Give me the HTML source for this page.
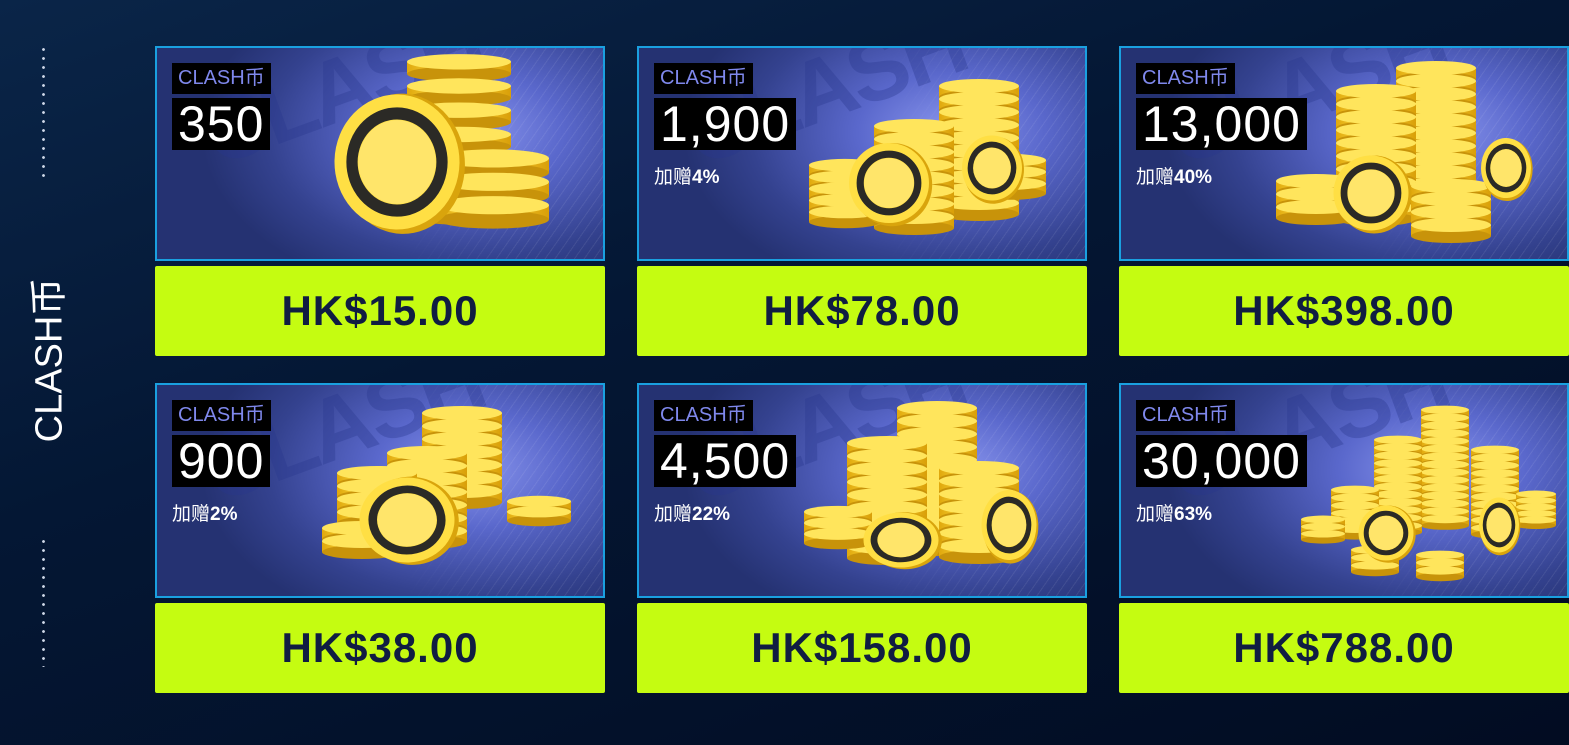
<!DOCTYPE html>
<html><head><meta charset="utf-8"><style>
*{margin:0;padding:0;box-sizing:border-box}
body{width:1569px;height:745px;overflow:hidden;background:linear-gradient(160deg,#0a2548 0%,#041734 40%,#020c22 100%);font-family:"Liberation Sans","Noto Sans CJK SC",sans-serif;position:relative}
.side{position:absolute;left:45px;top:360px;transform:translate(-50%,-50%) rotate(-90deg);color:#fff;font-size:38px;white-space:nowrap;letter-spacing:0}
.dots{position:absolute;left:42px;width:3px;background:radial-gradient(circle,#cfd8e8 1.2px,transparent 1.6px) 0 0/3px 9px repeat-y}
.card{position:absolute;width:450px}
.img{height:215px;border:2px solid #1aa0e0;background:radial-gradient(ellipse 60% 80% at 70% 40%,#8a96ee 0%,#5a68cc 35%,#34428f 75%,#253272 100%);position:relative;overflow:hidden}
.img:after{content:"";position:absolute;inset:0;background:repeating-linear-gradient(-55deg,transparent 0 7px,rgba(255,255,255,.08) 7px 8px);-webkit-mask:linear-gradient(90deg,transparent 55%,#000 80%);mask:linear-gradient(90deg,transparent 55%,#000 80%)}
.wm{position:absolute;left:40px;top:-10px;font-size:90px;font-weight:bold;color:rgba(40,55,140,.35);transform:rotate(-20deg);letter-spacing:-4px}
.lab{position:absolute;left:15px;top:15px;background:#000;color:#7f88ec;font-size:20px;padding:2px 6px 2px;line-height:27px;z-index:3}
.num{position:absolute;left:15px;top:50px;background:#000;color:#fff;font-size:50px;line-height:52px;padding:0 6px;z-index:3;letter-spacing:1px}
.bon{position:absolute;left:15px;top:114px;color:#fff;font-size:19px;z-index:3}
.bon b{font-weight:bold}
.btn{margin-top:5px;height:90px;background:#c5fc11;border-radius:2px;color:#101d42;font-size:42px;font-weight:bold;display:flex;align-items:center;justify-content:center;letter-spacing:1px}
svg.c{position:absolute;left:0;top:0;z-index:2}
</style></head><body>
<svg width="0" height="0" style="position:absolute"><defs>
<linearGradient id="g" x1="0" x2="1"><stop offset="0" stop-color="#e0a80c"/><stop offset=".4" stop-color="#ffe04a"/><stop offset="1" stop-color="#d99f08"/></linearGradient>
<g id="s"><rect x="0" y="8" width="80" height="11" fill="url(#g)"/><ellipse cx="40" cy="19" rx="40" ry="7" fill="#c8930a"/><ellipse cx="40" cy="8" rx="40" ry="7" fill="#ffe55c"/></g>
<g id="f"><ellipse cx="4" cy="2" rx="50" ry="52" fill="#d9a40c"/><circle r="50" fill="#ffdf44"/><circle r="36" fill="none" stroke="#2b2a26" stroke-width="9"/><circle r="31" fill="#ffe56a"/></g>
</defs></svg>

<div class="dots" style="top:45px;height:132px"></div>
<div class="dots" style="top:537px;height:130px"></div>
<div class="side">CLASH币</div>

<div class="card" style="left:155px;top:46px"><div class="img"><div class="wm">CLASH</div>
<svg class="c" width="450" height="215" viewBox="0 0 450 215">
<g transform="translate(250,5) scale(1.3,1.1)"><use href="#s" y="0"/><use href="#s" y="22"/><use href="#s" y="44"/><use href="#s" y="66"/><use href="#s" y="88"/><use href="#s" y="110"/><use href="#s" y="130"/></g>
<g transform="translate(280,100) scale(1.4,1.3)"><use href="#s" y="0"/><use href="#s" y="18"/><use href="#s" y="36"/></g>
<g transform="translate(240,114) scale(1.25,1.35) rotate(-10)"><use href="#f"/></g>
</svg>
<div class="lab">CLASH币</div><div class="num">350</div></div>
<div class="btn">HK$15.00</div></div>

<div class="card" style="left:637px;top:46px"><div class="img"><div class="wm">CLASH</div>
<svg class="c" width="450" height="215" viewBox="0 0 450 215">
<g transform="translate(300,30)"><use href="#s" y="0"/><use href="#s" y="13"/><use href="#s" y="26"/><use href="#s" y="39"/><use href="#s" y="52"/><use href="#s" y="65"/><use href="#s" y="78"/><use href="#s" y="91"/><use href="#s" y="104"/><use href="#s" y="117"/></g>
<g transform="translate(235,70)"><use href="#s" y="0"/><use href="#s" y="13"/><use href="#s" y="26"/><use href="#s" y="39"/><use href="#s" y="52"/><use href="#s" y="65"/><use href="#s" y="78"/><use href="#s" y="91"/></g>
<g transform="translate(170,110) scale(.9)"><use href="#s" y="0"/><use href="#s" y="13"/><use href="#s" y="26"/><use href="#s" y="39"/><use href="#s" y="52"/></g>
<g transform="translate(335,105) scale(.9)"><use href="#s" y="0"/><use href="#s" y="13"/><use href="#s" y="26"/></g>
<use href="#f" transform="translate(250,135) scale(.8)"/>
<use href="#f" transform="translate(353,120) scale(.6,.65) rotate(20)"/>
</svg>
<div class="lab">CLASH币</div><div class="num">1,900</div><div class="bon">加赠<b>4%</b></div></div>
<div class="btn">HK$78.00</div></div>

<div class="card" style="left:1119px;top:46px"><div class="img"><div class="wm">CLASH</div>
<svg class="c" width="450" height="215" viewBox="0 0 450 215">
<g transform="translate(275,12)"><use href="#s" y="0"/><use href="#s" y="13"/><use href="#s" y="26"/><use href="#s" y="39"/><use href="#s" y="52"/><use href="#s" y="65"/><use href="#s" y="78"/><use href="#s" y="91"/><use href="#s" y="104"/><use href="#s" y="117"/><use href="#s" y="130"/></g>
<g transform="translate(215,35)"><use href="#s" y="0"/><use href="#s" y="13"/><use href="#s" y="26"/><use href="#s" y="39"/><use href="#s" y="52"/><use href="#s" y="65"/><use href="#s" y="78"/><use href="#s" y="91"/><use href="#s" y="104"/><use href="#s" y="117"/></g>
<g transform="translate(290,130)"><use href="#s" y="0"/><use href="#s" y="13"/><use href="#s" y="26"/><use href="#s" y="39"/></g>
<g transform="translate(155,125)"><use href="#s" y="0"/><use href="#s" y="13"/><use href="#s" y="26"/></g>
<use href="#f" transform="translate(250,145) scale(.75)"/>
<use href="#f" transform="translate(385,120) scale(.5,.6) rotate(20)"/>
</svg>
<div class="lab">CLASH币</div><div class="num">13,000</div><div class="bon">加赠<b>40%</b></div></div>
<div class="btn">HK$398.00</div></div>

<div class="card" style="left:155px;top:383px"><div class="img"><div class="wm">CLASH</div>
<svg class="c" width="450" height="215" viewBox="0 0 450 215">
<g transform="translate(265,20)"><use href="#s" y="0"/><use href="#s" y="13"/><use href="#s" y="26"/><use href="#s" y="39"/><use href="#s" y="52"/><use href="#s" y="65"/><use href="#s" y="78"/></g>
<g transform="translate(230,60)"><use href="#s" y="0"/><use href="#s" y="13"/><use href="#s" y="26"/><use href="#s" y="39"/><use href="#s" y="52"/><use href="#s" y="65"/><use href="#s" y="78"/></g>
<g transform="translate(180,80)"><use href="#s" y="0"/><use href="#s" y="13"/><use href="#s" y="26"/><use href="#s" y="39"/></g>
<g transform="translate(350,110) scale(.8)"><use href="#s" y="0"/><use href="#s" y="13"/></g>
<g transform="translate(165,135)"><use href="#s" y="0"/><use href="#s" y="13"/></g>
<use href="#f" transform="translate(250,135) scale(.95,.85) rotate(-15)"/>
</svg>
<div class="lab">CLASH币</div><div class="num">900</div><div class="bon">加赠<b>2%</b></div></div>
<div class="btn">HK$38.00</div></div>

<div class="card" style="left:637px;top:383px"><div class="img"><div class="wm">CLASH</div>
<svg class="c" width="450" height="215" viewBox="0 0 450 215">
<g transform="translate(258,15)"><use href="#s" y="0"/><use href="#s" y="13"/><use href="#s" y="26"/><use href="#s" y="39"/><use href="#s" y="52"/><use href="#s" y="65"/><use href="#s" y="78"/><use href="#s" y="91"/><use href="#s" y="104"/><use href="#s" y="117"/><use href="#s" y="130"/></g>
<g transform="translate(208,50)"><use href="#s" y="0"/><use href="#s" y="13"/><use href="#s" y="26"/><use href="#s" y="39"/><use href="#s" y="52"/><use href="#s" y="65"/><use href="#s" y="78"/><use href="#s" y="91"/><use href="#s" y="104"/></g>
<g transform="translate(300,75)"><use href="#s" y="0"/><use href="#s" y="13"/><use href="#s" y="26"/><use href="#s" y="39"/><use href="#s" y="52"/><use href="#s" y="65"/><use href="#s" y="78"/></g>
<g transform="translate(165,120) scale(.85)"><use href="#s" y="0"/><use href="#s" y="13"/><use href="#s" y="26"/></g>
<use href="#f" transform="translate(262,155) scale(.75,.55) rotate(-10)"/>
<use href="#f" transform="translate(370,140) scale(.55,.7) rotate(20)"/>
</svg>
<div class="lab">CLASH币</div><div class="num">4,500</div><div class="bon">加赠<b>22%</b></div></div>
<div class="btn">HK$158.00</div></div>

<div class="card" style="left:1119px;top:383px"><div class="img"><div class="wm">CLASH</div>
<svg class="c" width="450" height="215" viewBox="0 0 450 215">
<g transform="translate(300,20) scale(.6)"><use href="#s" y="0"/><use href="#s" y="13"/><use href="#s" y="26"/><use href="#s" y="39"/><use href="#s" y="52"/><use href="#s" y="65"/><use href="#s" y="78"/><use href="#s" y="91"/><use href="#s" y="104"/><use href="#s" y="117"/><use href="#s" y="130"/><use href="#s" y="143"/><use href="#s" y="156"/><use href="#s" y="169"/><use href="#s" y="182"/></g>
<g transform="translate(253,50) scale(.6)"><use href="#s" y="0"/><use href="#s" y="13"/><use href="#s" y="26"/><use href="#s" y="39"/><use href="#s" y="52"/><use href="#s" y="65"/><use href="#s" y="78"/><use href="#s" y="91"/><use href="#s" y="104"/><use href="#s" y="117"/><use href="#s" y="130"/><use href="#s" y="143"/></g>
<g transform="translate(350,60) scale(.6)"><use href="#s" y="0"/><use href="#s" y="13"/><use href="#s" y="26"/><use href="#s" y="39"/><use href="#s" y="52"/><use href="#s" y="65"/><use href="#s" y="78"/><use href="#s" y="91"/><use href="#s" y="104"/><use href="#s" y="117"/><use href="#s" y="130"/></g>
<g transform="translate(210,100) scale(.6)"><use href="#s" y="0"/><use href="#s" y="13"/><use href="#s" y="26"/><use href="#s" y="39"/><use href="#s" y="52"/><use href="#s" y="65"/></g>
<g transform="translate(395,105) scale(.5)"><use href="#s" y="0"/><use href="#s" y="13"/><use href="#s" y="26"/><use href="#s" y="39"/><use href="#s" y="52"/></g>
<g transform="translate(180,130) scale(.55)"><use href="#s" y="0"/><use href="#s" y="13"/><use href="#s" y="26"/></g>
<g transform="translate(230,160) scale(.6)"><use href="#s" y="0"/><use href="#s" y="13"/><use href="#s" y="26"/></g>
<g transform="translate(295,165) scale(.6)"><use href="#s" y="0"/><use href="#s" y="13"/><use href="#s" y="26"/></g>
<use href="#f" transform="translate(265,148) scale(.55)"/>
<use href="#f" transform="translate(378,140) scale(.4,.55) rotate(20)"/>
</svg>
<div class="lab">CLASH币</div><div class="num">30,000</div><div class="bon">加赠<b>63%</b></div></div>
<div class="btn">HK$788.00</div></div>
</body></html>
